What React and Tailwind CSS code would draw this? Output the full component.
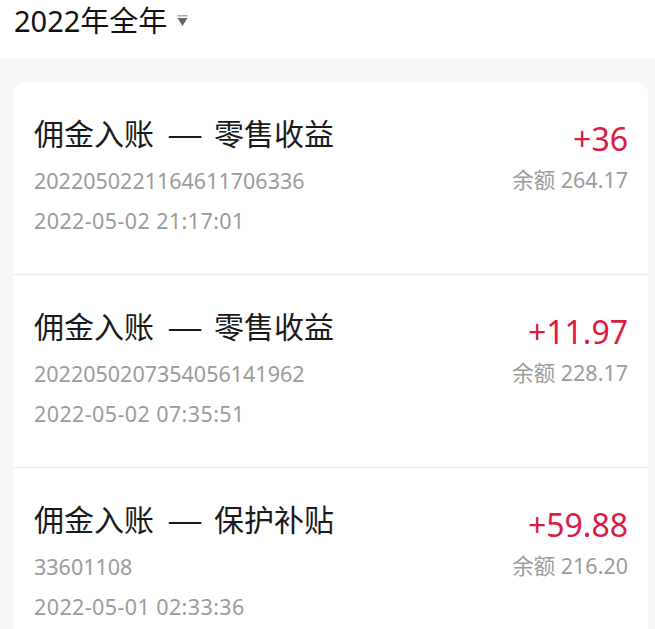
import React from "react"

const rows = [
  { title: ["佣金入账", "零售收益"], serial: "2022050221164611706336", time: "2022-05-02 21:17:01", amount: "+36", balance: "264.17" },
  { title: ["佣金入账", "零售收益"], serial: "2022050207354056141962", time: "2022-05-02 07:35:51", amount: "+11.97", balance: "228.17" },
  { title: ["佣金入账", "保护补贴"], serial: "33601108", time: "2022-05-01 02:33:36", amount: "+59.88", balance: "216.20" },
]

function Row({ item, last }) {
  return (
    <div className={`flex justify-between pl-[21px] pr-[20px] ${last ? "" : "border-b border-[#ebebeb]"}`}>
      <div className="flex flex-col pt-[32px] pb-[39px]">
        <div className="flex items-center text-[30px] leading-[37px] text-[#1a1a1a] font-['Noto_Sans_CJK_SC',sans-serif]">
          <span>{item.title[0]}</span>
          <span className="ml-[14px] mr-[12px] inline-block w-[34px] text-center scale-x-[1.35]">—</span>
          <span>{item.title[1]}</span>
        </div>
        <div className="mt-[16px] text-[21.5px] leading-[28px] text-[#9b9b9b]">{item.serial}</div>
        <div className="mt-[12px] text-[21.5px] leading-[28px] text-[#9b9b9b] tracking-[0.4px]">{item.time}</div>
      </div>
      <div className="flex flex-col items-end pt-[37px]">
        <div className="text-[32px] leading-[40px] text-[#dc1a46]">{item.amount}</div>
        <div className="mt-[7px] text-[21.5px] leading-[28px] text-[#9b9b9b]">余额 {item.balance}</div>
      </div>
    </div>
  )
}

export default function App() {
  return (
    <div className="w-[655px] h-[629px] overflow-hidden bg-[#f7f7f7] font-['Noto_Sans','Noto_Sans_CJK_SC',sans-serif]">
      {/* header */}
      <div className="h-[58px] bg-white flex items-start pl-[14px] pt-[2px]">
        <span className="text-[29px] leading-[38px] text-[#111]">2022年全年</span>
        <svg className="ml-[10px] mt-[13px]" width="11" height="12" viewBox="0 0 11 12">
          <rect x="0.5" y="0" width="10" height="1.5" fill="#aaa" />
          <path d="M0.5 3 H10.5 L5.5 11 Z" fill="#666" />
        </svg>
      </div>

      {/* list card */}
      <div className="ml-[13px] mr-[7px] mt-[24px] bg-white rounded-[12px]">
        {rows.map((r, i) => (
          <Row key={i} item={r} last={i === rows.length - 1} />
        ))}
      </div>
    </div>
  )
}
